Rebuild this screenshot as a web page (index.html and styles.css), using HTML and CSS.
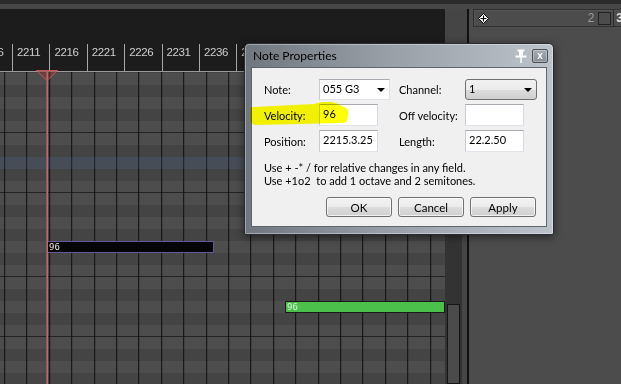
FILE: index.html
```html
<!DOCTYPE html>
<html lang="en">
<head>
    <meta charset="UTF-8">
    <title>Piano roll - Note Properties</title>
    <link rel="stylesheet" href="styles.css">
</head>
<body>

    <div class="app">
        <div class="topbar"></div>

        <div class="main">
            <!-- piano roll -->
            <div class="editor">
                <div class="ruler">
                    <div class="ticks">
                        <span class="tick">2206</span>
                        <span class="tick">2211</span>
                        <span class="tick">2216</span>
                        <span class="tick">2221</span>
                        <span class="tick">2226</span>
                        <span class="tick">2231</span>
                        <span class="tick">2236</span>
                        <span class="tick">2241</span>
                    </div>
                </div>
                <div class="grid">
                    <div class="hover-row"></div>
                    <div class="note note-selected" style="left:47px;top:169px;width:167px">96</div>
                    <div class="note note-green" style="left:285px;top:229px;width:160px">96</div>
                </div>

                <svg class="playhead-marker" width="22" height="11" viewBox="0 0 22 11">
                    <polygon points="0.5,0.5 21.5,0.5 11,10.5" fill="rgba(150,50,50,0.45)" stroke="#c85858" stroke-width="1"/>
                </svg>
                <div class="playhead"></div>
            </div>

            <div class="vscroll">
                <div class="vscroll-top"></div>
                <div class="vscroll-track">
                    <div class="thumb"></div>
                </div>
            </div>
            <div class="divider"></div>

            <!-- right side panel -->
            <div class="panel">
                <div class="panel-head">
                    <svg class="move-icon" width="11" height="11" viewBox="0 0 11 11">
                        <polygon points="5.5,0.5 10.5,5.5 5.5,10.5 0.5,5.5" fill="#fff" stroke="#000" stroke-width="1"/>
                        <path d="M5.5 2.5v6M2.5 5.5h6" stroke="#000" stroke-width="1.2"/>
                    </svg>
                    <span class="panel-num">2</span>
                    <span class="panel-box"></span>
                    <span class="panel-sep"></span>
                    <span class="panel-next">3</span>
                </div>
            </div>
        </div>

        <!-- Note Properties dialog -->
        <div class="dialog">
            <div class="titlebar">
                <span class="title">Note Properties</span>
                <svg class="pin" width="12" height="14" viewBox="0 0 12 14">
                    <rect x="2.5" y="0.5" width="7" height="2" fill="#fff"/>
                    <rect x="4" y="2" width="4" height="5" fill="#fff"/>
                    <rect x="0.5" y="6.5" width="11" height="2" fill="#fff"/>
                    <rect x="5.3" y="8" width="1.5" height="6" fill="#fff"/>
                </svg>
                <span class="close-btn">x</span>
            </div>

            <div class="client">
                <svg class="marker" width="100" height="24" viewBox="0 0 100 24">
                    <path d="M2 5 L64 2 Q76 -2 86 1 L94 5 Q99 7 98 13 L97 19 Q96 21 90 21 L6 23 Q0 23 0 16 L0 9 Q0 5 2 5 Z" fill="#ffff00"/>
                </svg>

                <div class="form">
                    <label>Note:</label>
                    <div class="combo combo-edit">055 G3<span class="arrow"></span></div>
                    <span></span>
                    <label>Channel:</label>
                    <div class="combo combo-btn">1<span class="arrow"></span></div>

                    <label>Velocity:</label>
                    <div class="field">96</div>
                    <span></span>
                    <label>Off velocity:</label>
                    <div class="field"></div>

                    <label>Position:</label>
                    <div class="field">2215.3.25</div>
                    <span></span>
                    <label>Length:</label>
                    <div class="field">22.2.50</div>
                </div>

                <p class="hint">Use + -* / for relative changes in any field.<br>Use +1o2&nbsp; to add 1 octave and 2 semitones.</p>

                <div class="buttons">
                    <button>OK</button>
                    <button>Cancel</button>
                    <button>Apply</button>
                </div>
            </div>
        </div>
    </div>

</body>
</html>
```

FILE: styles.css
```css
/* General */
body {
    margin: 0;
    background: #1c1c1c;
    font-family: 'Lato', 'Noto Sans', sans-serif;
    overflow: hidden;
}
.app {
    position: relative;
    width: 621px;
    height: 384px;
    overflow: hidden;
}
.topbar {
    height: 9px;
    background: linear-gradient(to bottom, #2c2c2c 0 4px, #474747 4px);
}
.main {
    display: flex;
    height: 375px;
}

/* Piano roll */
.editor {
    position: relative;
    width: 445px;
    display: flex;
    flex-direction: column;
    overflow: hidden;
}
.ruler {
    height: 63px;
    background: #1c1c1c;
    box-sizing: border-box;
    border-bottom: 1px solid #9a9a9a;
}
.ticks {
    display: flex;
    margin: 35px 0 0 -25.4px;
}
.tick {
    flex: none;
    width: 37.4px;
    height: 27px;
    box-sizing: border-box;
    border-left: 1px solid #a8a8a8;
    padding: 2px 0 0 4px;
    color: #cfcfcf;
    font-family: 'Liberation Sans', sans-serif;
    font-size: 11.5px;
    letter-spacing: -0.4px;
    line-height: 13px;
}
.grid {
    position: relative;
    flex: 1;
    background-color: #4d4d4d;
    background-image:
        repeating-linear-gradient(to right, #0e0e0e 0 1px, transparent 1px 22.4px),
        linear-gradient(to bottom,
            #4d4d4d 0 12px, #444 12px 24px, #4d4d4d 24px 36px, #444 36px 48px,
            #4d4d4d 48px 60px, #444 60px 72px, #4d4d4d 72px 83px, #232323 83px 84px,
            #4d4d4d 84px 96px, #444 96px 108px, #4d4d4d 108px 120px, #444 120px 132px,
            #4d4d4d 132px 143px, #232323 143px 144px);
    background-size: auto, 100% 144px;
    background-position: 4.2px 0, 0 -23px;
}
.hover-row {
    position: absolute;
    left: 0;
    right: 0;
    top: 85px;
    height: 12px;
    background: rgba(50, 80, 120, 0.25);
}
.note {
    position: absolute;
    height: 12px;
    box-sizing: border-box;
    padding-left: 1px;
    font-family: 'DejaVu Sans Mono', monospace;
    font-size: 9px;
    line-height: 10px;
}
.note-selected {
    background: #050505;
    border: 1px solid #64589a;
    color: #e6e6e6;
}
.note-green {
    background: #4bc04b;
    border: 1px solid #1a1a1a;
    color: #d8f3d8;
}
.playhead {
    position: absolute;
    left: 46px;
    top: 62px;
    bottom: 0;
    width: 2px;
    background: linear-gradient(to right, #8c4848, #c87878);
}
.playhead-marker {
    position: absolute;
    left: 36px;
    top: 61px;
}

/* Scrollbar column */
.vscroll {
    width: 22px;
    display: flex;
    flex-direction: column;
}
.vscroll-top {
    height: 63px;
    background: #454545;
}
.vscroll-track {
    flex: 1;
    padding: 232px 0 0 2px;
    background: linear-gradient(to right, #333 17px, #464646 17px);
}
.thumb {
    width: 13px;
    height: 100%;
    box-sizing: border-box;
    border: 1px solid #141414;
    background: #4b4b4b;
}
.divider {
    width: 2px;
    background: #111;
}

/* Right panel */
.panel {
    flex: 1;
    background: #4c4c4c;
}
.panel-head {
    display: flex;
    align-items: center;
    height: 18px;
    margin-left: 4px;
    box-sizing: border-box;
    border: 1px solid #303030;
    border-right: none;
    box-shadow: inset 1px 1px 0 #555;
}
.move-icon {
    margin-left: 4px;
}
.panel-num {
    margin-left: auto;
    color: #9c9c9c;
    font-family: 'Liberation Sans', sans-serif;
    font-size: 12px;
}
.panel-box {
    width: 11px;
    height: 11px;
    margin-left: 4px;
    border: 1px solid #222;
}
.panel-sep {
    width: 1px;
    height: 16px;
    margin-left: 2px;
    background: #2a2a2a;
}
.panel-next {
    margin: 0 -2px 0 2px;
    color: #e0e0e0;
    font-family: 'Liberation Sans', sans-serif;
    font-size: 12px;
    font-weight: bold;
}

/* Dialog */
.dialog {
    position: absolute;
    left: 244px;
    top: 43px;
    width: 310px;
    height: 192px;
    box-sizing: border-box;
    border: 1px solid #2a2e33;
    border-radius: 5px 5px 2px 2px;
    background: linear-gradient(to right, #6f767e, #979ea6 45%, #bcc3ca);
    box-shadow: inset 0 0 0 1px rgba(255, 255, 255, 0.35), 0 2px 8px rgba(0, 0, 0, 0.5);
}
.titlebar {
    display: flex;
    align-items: center;
    height: 23px;
    padding: 0 5px 0 8px;
}
.title {
    flex: 1;
    font-size: 12px;
    color: #000;
}
.pin {
    margin-right: 5px;
}
.close-btn {
    width: 16px;
    height: 14px;
    box-sizing: border-box;
    border: 1px solid #4b5158;
    border-radius: 2px;
    background: linear-gradient(to bottom, #a4abb3, #858c94);
    box-shadow: inset 0 0 0 1px rgba(255, 255, 255, 0.3);
    color: #fff;
    font-family: 'Liberation Sans', sans-serif;
    font-size: 10px;
    font-weight: bold;
    line-height: 11px;
    text-align: center;
}
.client {
    position: relative;
    height: 160px;
    margin: 0 6px;
    box-sizing: border-box;
    border: 1px solid #5f656c;
    background: #f0f0f0;
    padding: 11px 10px 0 12px;
    font-size: 11px;
    color: #000;
}
.marker {
    position: absolute;
    left: -2px;
    top: 34px;
    mix-blend-mode: multiply;
    z-index: 2;
}
.form {
    display: grid;
    grid-template-columns: 55px 71px 9px 66px 72px;
    grid-template-rows: 21px 22px 22px;
    row-gap: 4px;
    align-items: center;
    white-space: nowrap;
}
.field {
    width: 59px;
    height: 22px;
    box-sizing: border-box;
    border: 1px solid;
    border-color: #a9abb1 #d8dbe2 #e0e4ea #c8cbd1;
    background: #fff;
    padding: 1px 0 0 3px;
    line-height: 16px;
}
.combo {
    position: relative;
    height: 21px;
    box-sizing: border-box;
    padding-left: 3px;
    line-height: 18px;
}
.combo-edit {
    border: 1px solid;
    border-color: #a9abb1 #e0e3e8 #e0e4ea #c8cbd1;
    background: #fff;
}
.combo-btn {
    border: 1px solid #707070;
    border-radius: 3px;
    background: linear-gradient(to bottom, #f2f2f2, #ebebeb 50%, #dddddd 50%, #cfcfcf);
}
.arrow {
    position: absolute;
    right: 4px;
    top: 8px;
    border-left: 4px solid transparent;
    border-right: 4px solid transparent;
    border-top: 4px solid #000;
}
.hint {
    margin: 9px 0 0 0;
    line-height: 13px;
    white-space: nowrap;
}
.buttons {
    display: flex;
    justify-content: flex-end;
    gap: 6px;
    margin-top: 10px;
}
button {
    width: 66px;
    height: 20px;
    padding: 0;
    border: 1px solid #707070;
    border-radius: 3px;
    background: linear-gradient(to bottom, #f2f2f2, #ebebeb 50%, #dddddd 50%, #cfcfcf);
    box-shadow: inset 0 0 0 1px rgba(255, 255, 255, 0.7);
    font-family: inherit;
    font-size: 11.5px;
    color: #000;
}
```
